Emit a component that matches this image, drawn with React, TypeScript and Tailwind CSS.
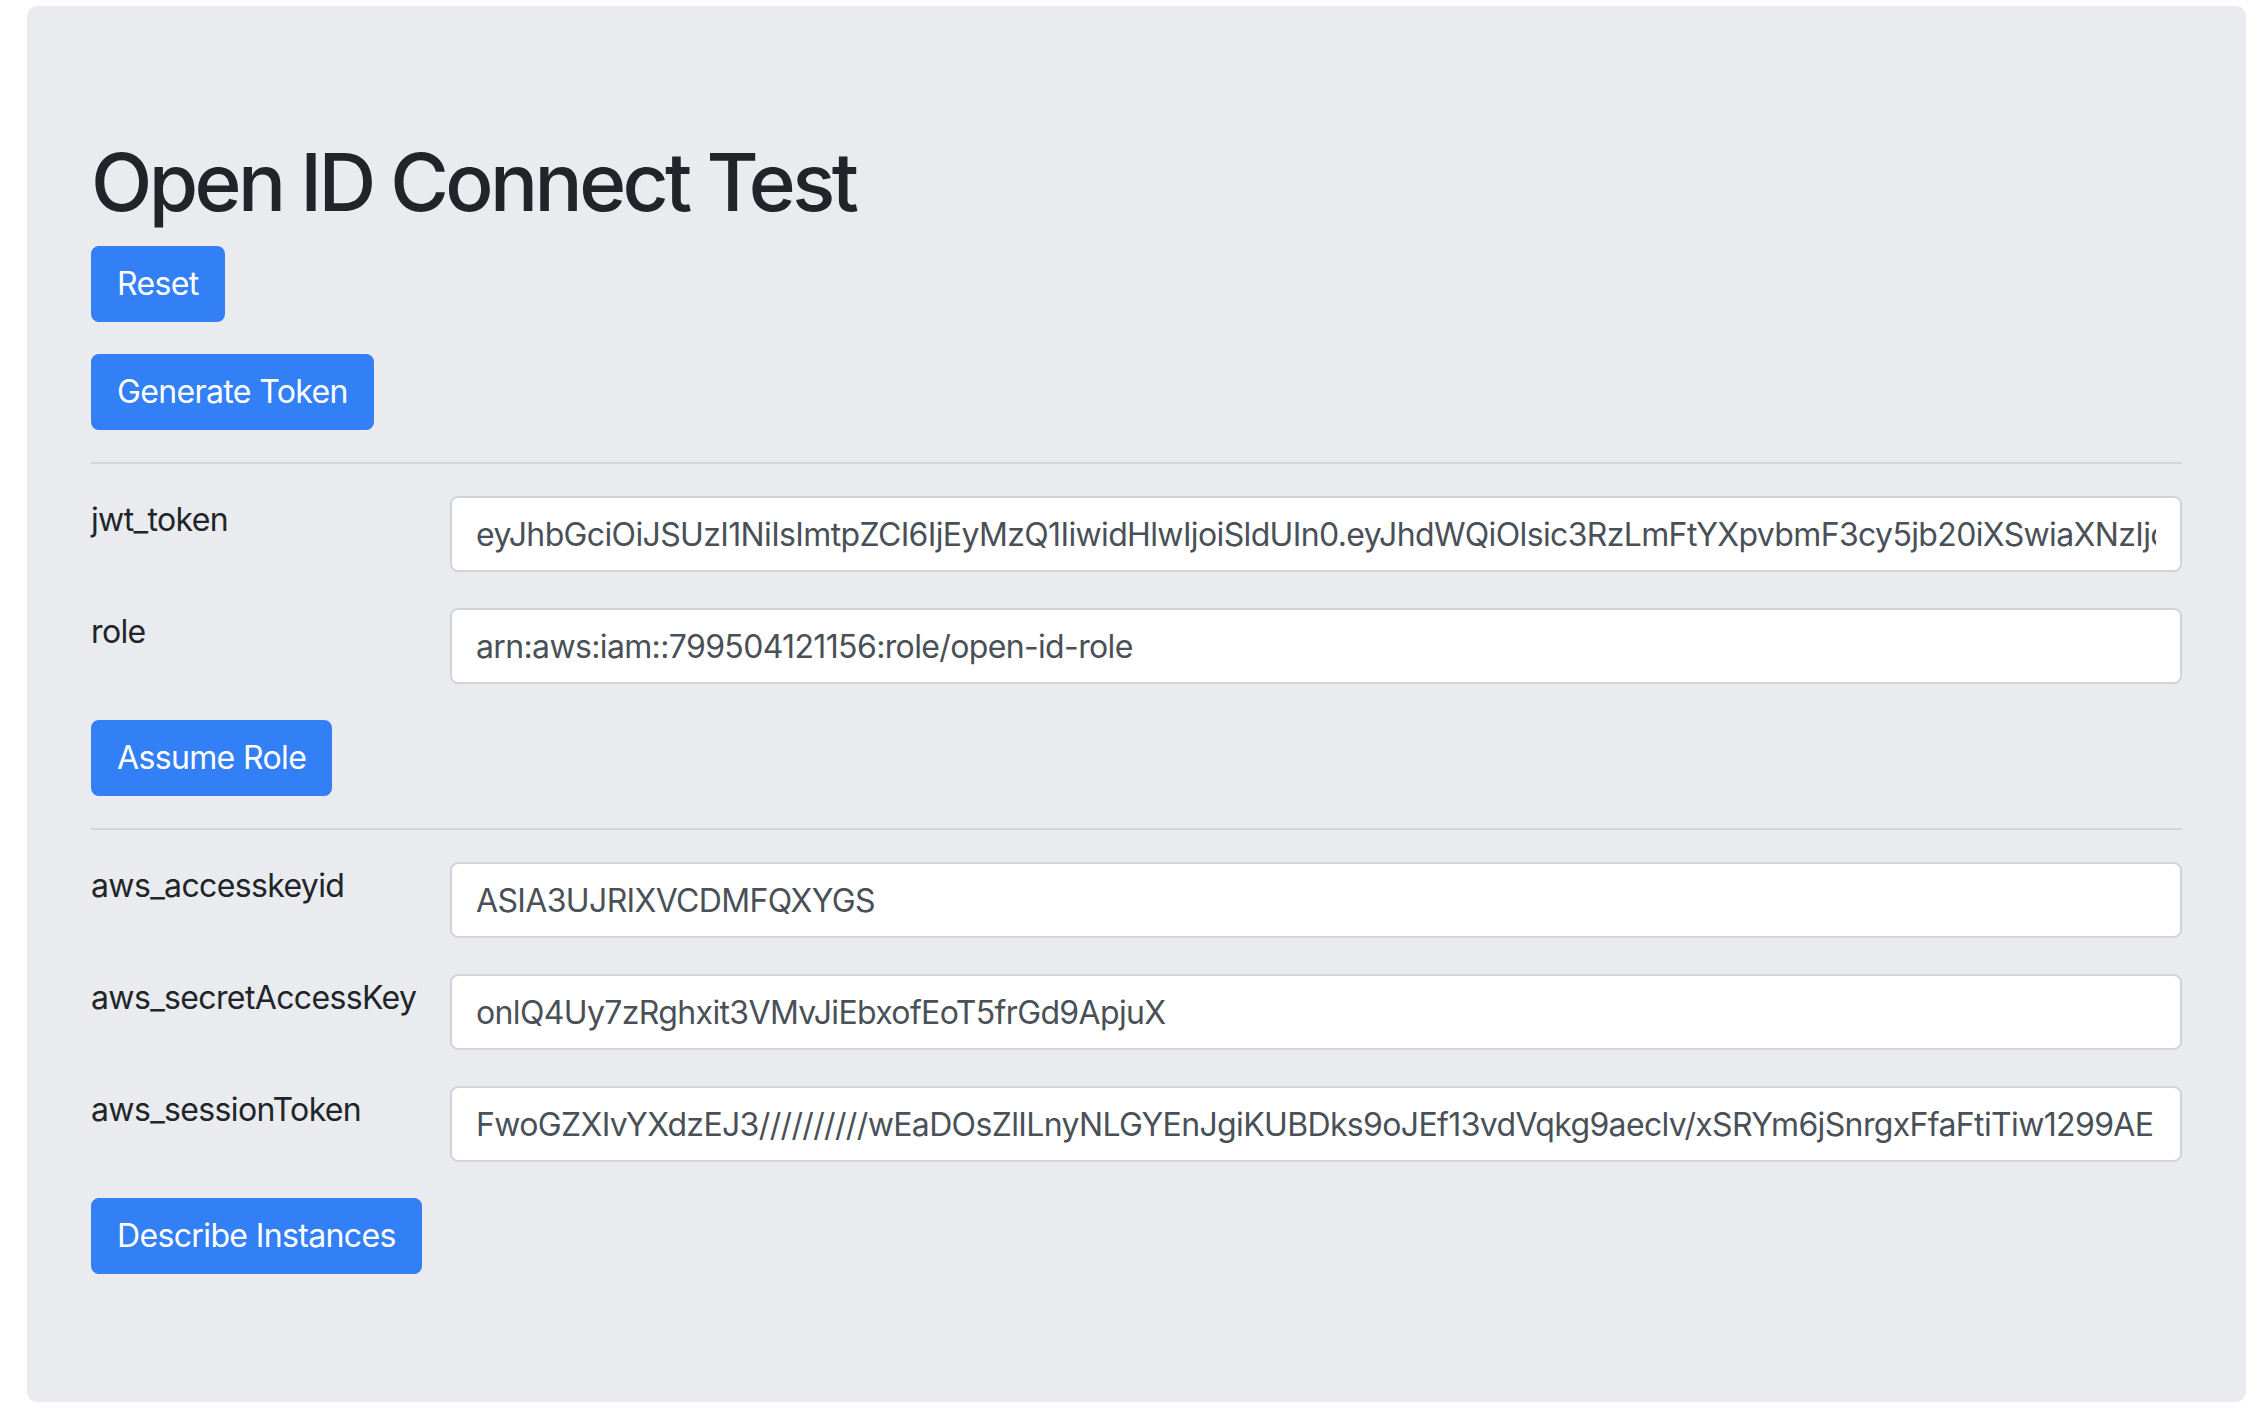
const font = { fontFamily: "Inter, 'Liberation Sans', sans-serif" };

const jwt =
  "eyJhbGciOiJSUzI1NiIsImtpZCI6IjEyMzQ1IiwidHlwIjoiSldUIn0.eyJhdWQiOlsic3RzLmFtYXpvbmF3cy5jb20iXSwiaXNzIjoiaHR0cHM6Ly9vcGVuaWQuZXhhbXBsZS5jb20iLCJzdWIiOiJ0ZXN0In0";
const session =
  "FwoGZXIvYXdzEJ3//////////wEaDOsZlILnyNLGYEnJgiKUBDks9oJEf13vdVqkg9aeclv/xSRYm6jSnrgxFfaFtiTiw1299AED+q7Zk2xVbT1mRr";

function Btn({ children }: { children: string }) {
  return (
    <button className="rounded-lg border-2 border-[#327ff6] bg-[#327ff6] px-6 py-3 text-[32px] leading-[48px] tracking-[-0.02em] text-white">
      {children}
    </button>
  );
}

function Field({ label, value }: { label: string; value: string }) {
  return (
    <div className="mb-[36px] flex">
      <label className="w-[359px] shrink-0 text-[32px] leading-[48px] tracking-[-0.02em] text-[#212529]">
        {label}
      </label>
      <input
        readOnly
        value={value}
        className="h-[76px] min-w-0 flex-1 rounded-lg border-2 border-[#ced4da] bg-white px-6 text-[32px] tracking-[-0.02em] text-[#495057] outline-none"
        style={font}
      />
    </div>
  );
}

export default function App() {
  return (
    <div className="min-h-screen bg-white pl-[27px] pr-[22px] pt-[6px]" style={font}>
      <div className="rounded-[10px] bg-[#e9ebef] px-16 py-32">
        <h1 className="mb-4 text-[80px] font-medium leading-[96px] tracking-[-0.045em] text-[#212529]">
          Open ID Connect Test
        </h1>
        <div className="mb-8">
          <Btn>Reset</Btn>
        </div>
        <div>
          <Btn>Generate Token</Btn>
        </div>
        <hr className="my-8 border-t-2 border-[#d2d5d9]" />
        <Field label="jwt_token" value={jwt} />
        <Field label="role" value="arn:aws:iam::799504121156:role/open-id-role" />
        <div>
          <Btn>Assume Role</Btn>
        </div>
        <hr className="my-8 border-t-2 border-[#d2d5d9]" />
        <Field label="aws_accesskeyid" value="ASIA3UJRIXVCDMFQXYGS" />
        <Field label="aws_secretAccessKey" value="onlQ4Uy7zRghxit3VMvJiEbxofEoT5frGd9ApjuX" />
        <Field label="aws_sessionToken" value={session} />
        <div>
          <Btn>Describe Instances</Btn>
        </div>
      </div>
    </div>
  );
}
